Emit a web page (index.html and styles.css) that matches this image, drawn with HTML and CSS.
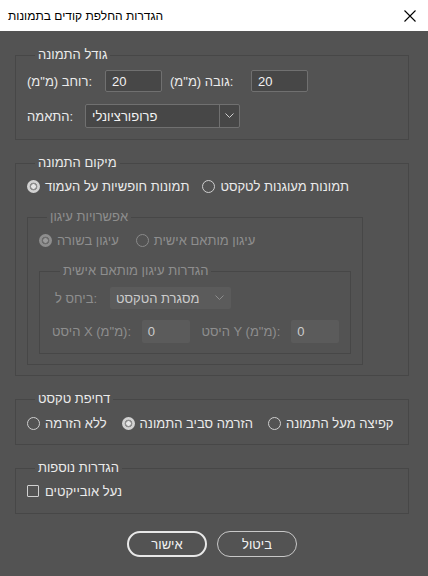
FILE: index.html
```html
<!DOCTYPE html>
<html lang="he">
<head>
<meta charset="utf-8">
<title>הגדרות החלפת קודים בתמונות</title>
<link rel="stylesheet" href="styles.css">
</head>
<body>
<div class="titlebar">
  <span class="title">הגדרות החלפת קודים בתמונות</span>
  <svg class="close" width="12" height="12" viewBox="0 0 12 12"><path d="M0.5 0.5L11.5 11.5M11.5 0.5L0.5 11.5" stroke="#000" stroke-width="1.1" fill="none"/></svg>
</div>
<div class="content">
  <fieldset class="group g-size">
    <legend>גודל התמונה</legend>
    <div class="row">
      <span class="lbl lbl-w">רוחב (מ"מ):</span>
      <span class="field num">20</span>
      <span class="lbl lbl-h">גובה (מ"מ):</span>
      <span class="field num">20</span>
    </div>
    <div class="row row-fit">
      <span class="lbl lbl-fit">התאמה:</span>
      <span class="select sel-fit"><span class="sel-text">פרופורציונלי</span><span class="sel-arrow"><svg width="9" height="6" viewBox="0 0 9 6"><path d="M0.5 0.5L4.5 4.5L8.5 0.5" stroke="#cfcfcf" fill="none"/></svg></span></span>
    </div>
  </fieldset>

  <fieldset class="group g-pos">
    <legend>מיקום התמונה</legend>
    <div class="row radios r-pos">
      <span class="radio"><span class="dot on"></span>תמונות חופשיות על העמוד</span>
      <span class="radio"><span class="dot"></span>תמונות מעוגנות לטקסט</span>
    </div>
    <fieldset class="group g-anchor disabled">
      <legend>אפשרויות עיגון</legend>
      <div class="row radios r-anchor">
        <span class="radio"><span class="dot on"></span>עיגון בשורה</span>
        <span class="radio"><span class="dot"></span>עיגון מותאם אישית</span>
      </div>
      <fieldset class="group g-custom">
        <legend>הגדרות עיגון מותאם אישית</legend>
        <div class="row row-rel">
          <span class="lbl lbl-rel">ביחס ל:</span>
          <span class="select sel-rel"><span class="sel-text">מסגרת הטקסט</span><span class="sel-arrow"><svg width="9" height="6" viewBox="0 0 9 6"><path d="M0.5 0.5L4.5 4.5L8.5 0.5" stroke="#8c8c8c" fill="none"/></svg></span></span>
        </div>
        <div class="row row-off">
          <span class="lbl lbl-x">היסט X (מ"מ):</span>
          <span class="field small">0</span>
          <span class="lbl lbl-y">היסט Y (מ"מ):</span>
          <span class="field small">0</span>
        </div>
      </fieldset>
    </fieldset>
  </fieldset>

  <fieldset class="group g-wrap">
    <legend>דחיפת טקסט</legend>
    <div class="row radios r-wrap">
      <span class="radio"><span class="dot"></span>ללא הזרמה</span>
      <span class="radio"><span class="dot on"></span>הזרמה סביב התמונה</span>
      <span class="radio"><span class="dot"></span>קפיצה מעל התמונה</span>
    </div>
  </fieldset>

  <fieldset class="group g-more">
    <legend>הגדרות נוספות</legend>
    <div class="row">
      <span class="check"><span class="box"></span>נעל אובייקטים</span>
    </div>
  </fieldset>

  <div class="buttons">
    <span class="btn btn-ok">אישור</span>
    <span class="btn btn-cancel">ביטול</span>
  </div>
</div>
</body>
</html>
```
FILE: styles.css
```css
html, body {
  margin: 0;
  padding: 0;
}
body {
  width: 428px;
  height: 576px;
  overflow: hidden;
  background: #535353;
  font-family: "Liberation Sans", "DejaVu Sans", sans-serif;
  font-size: 13px;
  color: #ebebeb;
  direction: ltr;
}
.titlebar {
  height: 31px;
  background: #ffffff;
  display: flex;
  align-items: center;
  justify-content: space-between;
  padding: 0 12px 0 8px;
  color: #000;
  box-sizing: border-box;
}
.title {
  font-size: 12px;
}
.close {
  display: block;
}
.content {
  padding: 17px 19px 0 15px;
  display: flex;
  flex-direction: column;
  gap: 16px;
}
fieldset.group {
  margin: 0;
  border: 1px solid #474747;
  min-width: 0;
  display: flex;
  flex-direction: column;
}
legend {
  padding: 0 3px;
  margin-left: 8px;
  line-height: 14px;
  height: 14px;
}
.row {
  display: flex;
  align-items: center;
}
.lbl {
  white-space: nowrap;
}
.field {
  box-sizing: border-box;
  height: 22px;
  border: 1px solid #707070;
  border-radius: 2px;
  background: #474747;
  color: #f2f2f2;
  padding: 0 0 0 6px;
  display: flex;
  align-items: center;
}
.num {
  width: 57px;
}
.select {
  box-sizing: border-box;
  display: flex;
  align-items: stretch;
  border: 1px solid #707070;
  border-radius: 2px;
  background: #474747;
  color: #f2f2f2;
}
.sel-text {
  flex: 1;
  display: flex;
  align-items: center;
  padding-left: 6px;
}
.sel-arrow {
  width: 19px;
  border-left: 1px solid #707070;
  display: flex;
  align-items: center;
  justify-content: center;
}

/* group 1 */
.g-size {
  padding: 8px 11px 11px 11px;
  gap: 12px;
}
.lbl-w { width: 78px; }
.lbl-h { width: 81px; margin-left: 8px; }
.lbl-fit { width: 58px; }
.sel-fit { width: 155px; height: 24px; }

/* radios */
.radios { height: 16px; }
.radio {
  display: flex;
  align-items: center;
  gap: 5px;
  white-space: nowrap;
}
.dot {
  box-sizing: border-box;
  width: 13px;
  height: 13px;
  border-radius: 50%;
  border: 1px solid #cfcfcf;
}
.dot.on {
  border: none;
  background: radial-gradient(circle, #e6e6e6 0 2px, #8e8e8e 2.6px 3.6px, #d2d2d2 4.2px);
}
.r-pos { gap: 13px; }

/* group 2 */
.g-pos {
  padding: 8px 11px 10px 11px;
}
.g-anchor {
  width: 336px;
  box-sizing: border-box;
  margin-top: 16px !important;
  padding: 8px 11px 10px 11px;
}
.r-anchor { gap: 17px; }
.disabled, .disabled legend {
  color: #8e8e8e;
}
.disabled .dot {
  border-color: #8a8a8a;
}
.disabled .dot.on {
  background: radial-gradient(circle, #9a9a9a 0 2px, #6c6c6c 2.6px 3.6px, #8e8e8e 4.2px);
}
.g-custom {
  width: 312px;
  box-sizing: border-box;
  margin-top: 16px !important;
  padding: 9px 11px 10px 12px;
  gap: 11px;
}
.disabled .select, .disabled .field {
  border: none;
  background: #5b5b5b;
  color: #cccccc;
}
.disabled .sel-arrow {
  border-left: none;
  width: 23px;
}
.lbl-rel { width: 55px; padding-left: 3px; }
.sel-rel { width: 121px; height: 22px; }
.row-off { height: 23px; }
.small { width: 48px; height: 23px; }
.lbl-x { width: 90px; }
.lbl-y { width: 90px; margin-left: 12px; }

/* group 3 */
.g-wrap {
  padding: 9px 11px 13px 11px;
}
.r-wrap { gap: 15px; }

/* group 4 */
.g-more {
  margin-top: 1px;
  padding: 9px 11px 15px 11px;
}
.g-more .row { height: 14px; }
.check {
  display: flex;
  align-items: center;
  gap: 6px;
  white-space: nowrap;
}
.box {
  box-sizing: border-box;
  width: 12px;
  height: 12px;
  border: 1px solid #d0d0d0;
  border-radius: 1px;
}

/* buttons */
.buttons {
  display: flex;
  justify-content: center;
  gap: 10px;
  margin-top: 1px;
}
.btn {
  box-sizing: border-box;
  width: 80px;
  height: 26px;
  border-radius: 13px;
  display: flex;
  align-items: center;
  justify-content: center;
  color: #f2f2f2;
}
.btn-ok {
  border: 2px solid #e8e8e8;
}
.btn-cancel {
  border: 1px solid #c8c8c8;
}
```
